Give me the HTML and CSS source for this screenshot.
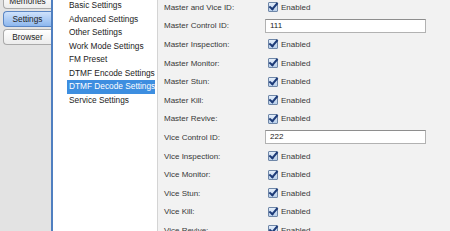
FILE: index.html
```html
<!DOCTYPE html>
<html lang="en">
<head>
    <meta charset="UTF-8">
    <title>Settings</title>
    <link rel="stylesheet" href="styles.css">
</head>
<body>
    <div class="window">
        <div class="tabs">
            <div class="tab">Memories</div>
            <div class="tab active">Settings</div>
            <div class="tab">Browser</div>
        </div>

        <div class="menu">
            <div class="menu-item">Basic Settings</div>
            <div class="menu-item">Advanced Settings</div>
            <div class="menu-item">Other Settings</div>
            <div class="menu-item">Work Mode Settings</div>
            <div class="menu-item">FM Preset</div>
            <div class="menu-item">DTMF Encode Settings</div>
            <div class="menu-item selected">DTMF Decode Settings</div>
            <div class="menu-item">Service Settings</div>
        </div>

        <div class="form">
            <div class="row"><span class="label">Master and Vice ID:</span><span class="check"><span class="box"></span>Enabled</span></div>
            <div class="row"><span class="label">Master Control ID:</span><span class="field">111</span></div>
            <div class="row"><span class="label">Master Inspection:</span><span class="check"><span class="box"></span>Enabled</span></div>
            <div class="row"><span class="label">Master Monitor:</span><span class="check"><span class="box"></span>Enabled</span></div>
            <div class="row"><span class="label">Master Stun:</span><span class="check"><span class="box"></span>Enabled</span></div>
            <div class="row"><span class="label">Master Kill:</span><span class="check"><span class="box"></span>Enabled</span></div>
            <div class="row"><span class="label">Master Revive:</span><span class="check"><span class="box"></span>Enabled</span></div>
            <div class="row"><span class="label">Vice Control ID:</span><span class="field">222</span></div>
            <div class="row"><span class="label">Vice Inspection:</span><span class="check"><span class="box"></span>Enabled</span></div>
            <div class="row"><span class="label">Vice Monitor:</span><span class="check"><span class="box"></span>Enabled</span></div>
            <div class="row"><span class="label">Vice Stun:</span><span class="check"><span class="box"></span>Enabled</span></div>
            <div class="row"><span class="label">Vice Kill:</span><span class="check"><span class="box"></span>Enabled</span></div>
            <div class="row"><span class="label">Vice Revive:</span><span class="check"><span class="box"></span>Enabled</span></div>
        </div>
    </div>
</body>
</html>
```

FILE: styles.css
```css
body {
    margin: 0;
    font-family: "Liberation Sans", Arial, sans-serif;
    font-size: 8px;
    background-color: #f2f2f2;
}
.window {
    display: flex;
    height: 231px;
    overflow: hidden;
}

/* tabs on the left */
.tabs {
    width: 51px;
    flex-shrink: 0;
    background-color: #e3e3e3;
    margin-top: -7px;
    font-size: 8.3px;
}
.tab {
    height: 14px;
    line-height: 14px;
    margin: 0 0 2px 3px;
    border: 1px solid #a9a9a9;
    border-right: none;
    border-radius: 4px 0 0 4px;
    background: linear-gradient(#ffffff, #ececec);
    text-align: center;
    color: #222;
}
.tab.active {
    border-color: #5b86c4;
    background: linear-gradient(#cfe2fb, #8db7ee);
}

/* settings menu */
.menu {
    width: 104px;
    flex-shrink: 0;
    background-color: #fff;
    border-left: 2px solid #4f7fc0;
    border-right: 1px solid #d4d4d4;
    margin-top: -1px;
    font-size: 8.3px;
}
.menu-item {
    height: 13.5px;
    line-height: 13.5px;
    margin: 0 2px 0 14px;
    padding-left: 2px;
    color: #1c1c1c;
    white-space: nowrap;
}
.menu-item.selected {
    background-color: #3d8ee0;
    color: #fff;
}

/* form */
.form {
    flex: 1;
    padding-left: 6px;
    margin-top: -2px;
    color: #383838;
}
.row {
    display: flex;
    align-items: center;
    height: 18.6px;
}
.label {
    width: 101px;
    flex-shrink: 0;
}
.check {
    display: flex;
    align-items: center;
    margin-left: 3px;
}
.box {
    position: relative;
    width: 8px;
    height: 8px;
    margin-right: 3px;
    border: 1px solid #6f87a8;
    border-radius: 1px;
    background: linear-gradient(#e4eefa, #b9cfea);
}
.box::after {
    content: "";
    position: absolute;
    left: 2px;
    top: -2px;
    width: 3px;
    height: 7px;
    border-right: 2px solid #1d3b78;
    border-bottom: 2px solid #1d3b78;
    transform: rotate(40deg);
}
.field {
    width: 155px;
    height: 12px;
    line-height: 12px;
    padding-left: 4px;
    border: 1px solid #b2b2b2;
    border-top-color: #8e8e8e;
    background-color: #fff;
    color: #222;
}
```
